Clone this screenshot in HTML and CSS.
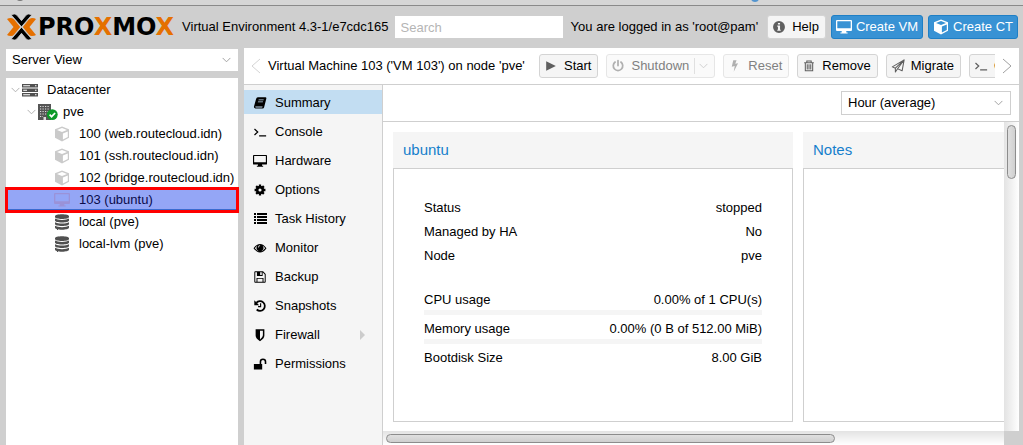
FILE: index.html
```html
<!DOCTYPE html>
<html lang="en">
<head>
<meta charset="utf-8">
<title>Proxmox Virtual Environment</title>
<link rel="stylesheet" href="styles.css">
</head>
<body>
<svg class="sprite" aria-hidden="true">
  <symbol id="cube" viewBox="0 0 16 16"><path fill-rule="evenodd" d="M8 .6 15 3.2V11.8L8 15.6 1 11.8V3.2ZM8 2 3 3.9 8 5.9 13 3.9ZM8.9 7.4V13.6L13.8 11V5.5Z"/></symbol>
  <symbol id="desktop" viewBox="0 0 16 16"><path fill-rule="evenodd" d="M1 1H15Q16 1 16 2V11Q16 12 15 12H10.3V13.4H11.6V14.6H4.4V13.4H5.7V12H1Q0 12 0 11V2Q0 1 1 1ZM1.3 2.2V9.3H14.7V2.2Z"/></symbol>
  <symbol id="disks" viewBox="0 0 16 16"><path d="M1 2.2C1 .9 4 .2 8 .2S15 .9 15 2.2V3C15 4.3 12 5 8 5S1 4.3 1 3ZM1 4.6C2.500 5.500 5 6 8 6S13.500 5.500 15 4.600V6.500C15 7.800 12 8.500 8 8.500S1 7.800 1 6.500ZM1 8.200C2.500 9.100 5 9.600 8 9.600S13.500 9.100 15 8.200V10C15 11.300 12 12 8 12S1 11.300 1 10ZM1 11.800C2.500 12.700 5 13.200 8 13.200S13.500 12.700 15 11.800V13.600C15 15 12 15.800 8 15.800S1 15 1 13.600Z"/></symbol>
  <symbol id="server" viewBox="0 0 16 16"><path fill-rule="evenodd" d="M0 2H16V5.500H0ZM0 6.500H16V10H0ZM0 11H16V14.500H0ZM1.200 3.300V4.200H8V3.300ZM1.200 7.800V8.700H5V7.800ZM1.200 12.300V13.200H8V12.300ZM13 3.200V4.300H14.500V3.200ZM13 7.700V8.800H14.500V7.700ZM13 12.200V13.300H14.500V12.200Z"/></symbol>
  <symbol id="building" viewBox="0 0 20 16"><path fill="#555" d="M0 0H13V16H0Z"/><path stroke="#ddd" stroke-width="1.200" stroke-dasharray="1.200 1.300" d="M2 2.500H12M2 5H12M2 7.500H12M2 10H12M2 12.500H5"/><path fill="#ddd" d="M5.500 13H8V16H5.500Z"/><circle cx="14.300" cy="10.600" r="5.400" fill="#0c9a28"/><path fill="none" stroke="#fff" stroke-width="1.700" d="m11.600 10.700 2 2 3.500-3.700"/></symbol>
  <symbol id="book" viewBox="0 0 16 16"><path fill-rule="evenodd" d="M5.500 1.500H14.300Q15.600 1.800 15.200 3.200L12.700 12.800Q12.300 14.300 11 14.300H3Q.6 13.900 1.200 11.800L3.500 3.400Q4 1.700 5.500 1.500ZM6.500 4 6.200 4.900H12L12.300 4ZM5.800 6.300 5.500 7.200H11.200L11.500 6.300ZM2.800 12Q2.300 13.100 3.300 13.100H10.500L11 12Z"/></symbol>
  <symbol id="terminal" viewBox="0 0 16 16"><path fill="none" stroke="currentColor" stroke-width="1.400" d="m1.700 4.500 3.700 3.500-3.700 3.500M7 12.300H15"/></symbol>
  <symbol id="gear" viewBox="0 0 16 16"><circle cx="8" cy="8" r="3.300" fill="none" stroke="currentColor" stroke-width="3"/><path fill="none" stroke="currentColor" stroke-width="2.600" d="M8 1.800V4M8 12V14.200M1.800 8H4M12 8H14.200M3.600 3.600 5.200 5.200M10.800 10.800 12.400 12.400M3.600 12.400 5.200 10.800M10.800 5.200 12.400 3.600"/></symbol>
  <symbol id="list" viewBox="0 0 14 14"><path d="M1 1H3V3H1ZM4 1H14V3H4ZM1 4H3V6H1ZM4 4H14V6H4ZM1 7H3V9H1ZM4 7H14V9H4ZM1 10H3V12H1ZM4 10H14V12H4Z"/></symbol>
  <symbol id="eye" viewBox="0 0 16 16"><path fill-rule="evenodd" d="M.6 8.200Q4 3.300 8 3.300T15.400 8.200Q12 13.200 8 13.200T.6 8.200ZM2.100 8.200Q5 11.900 8 11.900T13.900 8.200Q12.600 6.300 11 5.400A3.900 3.900 0 1 1 5 5.400Q3.400 6.300 2.100 8.200ZM8 5A2 2 0 0 0 6 7.300L6.800 7.300A1.500 1.500 0 0 1 8.200 5.800Z"/></symbol>
  <symbol id="floppy" viewBox="0 0 16 16"><path fill-rule="evenodd" d="M2.500 1.500H11.500L14.500 4.500V13.500Q14.500 14.500 13.500 14.500H2.500Q1.500 14.500 1.500 13.500V2.500Q1.500 1.500 2.500 1.500ZM2.600 2.600V13.400H4V9H12V13.400H13.400V5L11 2.600V6.800H4.500V2.600ZM5.100 10.100V13.400H10.900V10.100ZM8.200 2.600V5.700H10V2.600Z"/></symbol>
  <symbol id="history" viewBox="0 0 16 16"><path fill="none" stroke="currentColor" stroke-width="2" d="M3.800 4.500A5.500 5.500 0 1 1 4.200 12"/><path d="M1.500 1.500V7H7Z"/><path fill="none" stroke="currentColor" stroke-width="1.300" d="M8.700 4.800V8.700H5.800"/></symbol>
  <symbol id="shield" viewBox="0 0 16 16"><path fill-rule="evenodd" d="M3 1.500H13V8.500Q13 12 8 15 3 12 3 8.500ZM8 3.200V13Q11.300 11 11.300 8.400V3.200Z"/></symbol>
  <symbol id="unlock" viewBox="0 0 16 16"><path d="M1 8H10.500V14.300H1Z"/><path fill="none" stroke="currentColor" stroke-width="1.800" d="M8.500 8.500V5.500A2.900 2.900 0 0 1 14.300 5.500V8"/></symbol>
  <symbol id="play" viewBox="0 0 16 16"><path d="M2.500 2.500 13.500 8 2.500 13.500Z"/></symbol>
  <symbol id="power" viewBox="0 0 16 16"><path fill="none" stroke="currentColor" stroke-width="2" stroke-linecap="round" d="M8 1.800V7.500M4.700 3.500A5.400 5.400 0 1 0 11.300 3.500"/></symbol>
  <symbol id="bolt" viewBox="0 0 16 16"><path d="M6 1.500H9.800L8.300 5.500 11.500 4.800 6.500 14.700 7.700 8 4.300 8.900Z"/></symbol>
  <symbol id="trash" viewBox="0 0 16 16"><path fill="none" stroke="currentColor" stroke-width="1.200" d="M2.500 4.300H13.500M5.500 4V2.200H10.500V4M3.800 4.500V13.500H12.200V4.500M6 6V12M8 6V12M10 6V12"/></symbol>
  <symbol id="plane" viewBox="0 0 16 16"><path fill="none" stroke="currentColor" stroke-width="1.200" stroke-linejoin="round" d="M15 1 1.500 9 5 10.500 15 1 12.700 13.500 7.200 11M5 10.500V14.800L7.500 11.200 15 1"/></symbol>
  <symbol id="info" viewBox="0 0 16 16"><path fill-rule="evenodd" d="M8 1.200A6.800 6.800 0 1 1 8 14.800 6.800 6.800 0 0 1 8 1.200ZM6.800 3.300V5.200H9.200V3.300ZM6 6.400V7.600H6.800V11H6V12.300H10V11H9.200V6.400Z"/></symbol>
  <symbol id="down" viewBox="0 0 10 6"><path fill="none" stroke="currentColor" d="m.7.700 4.300 4.300L9.300.7"/></symbol>
</svg>

<div class="strip"><span class="strip-dot strip-dot-dark"></span><span class="strip-dot strip-dot-blue"></span></div>

<header class="header">
  <svg class="logo-mark" viewBox="0 0 29 26" aria-hidden="true">
    <path fill="#e57000" d="M0 5Q1.500 4 4 4 6 4 7.200 5.500L13.200 13 7.200 20.500Q6 22 4 22 1.500 22 0 21L6.500 13ZM29 5Q27.500 4 25 4 23 4 21.800 5.500L15.800 13 21.800 20.500Q23 22 25 22 27.500 22 29 21L22.500 13Z"/>
    <path fill="#000" stroke="#cfcfcf" stroke-width=".8" d="M4.300 1Q6 0 7.500 0 9 0 10.200 1.500L14.500 6.700 18.800 1.500Q20 0 21.500 0 23 0 24.700 1L14.500 12.800ZM4.300 25Q6 26 7.500 26 9 26 10.200 24.500L14.500 19.300 18.800 24.500Q20 26 21.500 26 23 26 24.700 25L14.500 13.200Z"/>
  </svg>
  <span class="wordmark">PRO<span class="wordmark-x">X</span>MO<span class="wordmark-x">X</span></span>
  <span class="version">Virtual Environment 4.3-1/e7cdc165</span>
  <input class="search" type="text" placeholder="Search" aria-label="Search">
  <span class="user">You are logged in as 'root@pam'</span>
  <div class="header-actions">
    <button class="btn" type="button"><svg class="icon"><use href="#info"/></svg>Help</button>
    <button class="btn btn-primary" type="button"><svg class="icon"><use href="#desktop"/></svg>Create VM</button>
    <button class="btn btn-primary" type="button"><svg class="icon"><use href="#cube"/></svg>Create CT</button>
  </div>
</header>

<div class="main">
  <aside class="left">
    <div class="select-wrap">
      <select class="select" aria-label="View"><option>Server View</option></select>
      <svg class="select-arrow"><use href="#down"/></svg>
    </div>
    <ul class="tree">
      <li class="node"><svg class="expander"><use href="#down"/></svg><svg class="tree-icon"><use href="#server"/></svg>Datacenter</li>
      <li class="node level-1"><svg class="expander"><use href="#down"/></svg><svg class="tree-icon building"><use href="#building"/></svg>pve</li>
      <li class="node level-2"><svg class="tree-icon off"><use href="#cube"/></svg>100 (web.routecloud.idn)</li>
      <li class="node level-2"><svg class="tree-icon off"><use href="#cube"/></svg>101 (ssh.routecloud.idn)</li>
      <li class="node level-2"><svg class="tree-icon off"><use href="#cube"/></svg>102 (bridge.routecloud.idn)</li>
      <li class="node level-2 selected"><svg class="tree-icon"><use href="#desktop"/></svg>103 (ubuntu)</li>
      <li class="node level-2"><svg class="tree-icon"><use href="#disks"/></svg>local (pve)</li>
      <li class="node level-2"><svg class="tree-icon"><use href="#disks"/></svg>local-lvm (pve)</li>
    </ul>
  </aside>

  <main class="right">
    <div class="toolbar">
      <button class="scroller faded" type="button" aria-label="Scroll left"><svg viewBox="0 0 10 16"><path d="M9 1 1 8 9 15"/></svg></button>
      <h1 class="title">Virtual Machine 103 ('VM 103') on node 'pve'</h1>
      <div class="tools">
        <button class="btn" type="button"><svg class="icon"><use href="#play"/></svg>Start</button>
        <button class="btn" type="button" disabled><svg class="icon"><use href="#power"/></svg>Shutdown<span class="split"><svg class="split-arrow"><use href="#down"/></svg></span></button>
        <button class="btn" type="button" disabled><svg class="icon"><use href="#bolt"/></svg>Reset</button>
        <button class="btn" type="button"><svg class="icon"><use href="#trash"/></svg>Remove</button>
        <button class="btn" type="button"><svg class="icon"><use href="#plane"/></svg>Migrate</button>
        <button class="btn" type="button"><svg class="icon"><use href="#terminal"/></svg>Console</button>
      </div>
      <button class="scroller" type="button" aria-label="Scroll right"><svg viewBox="0 0 10 16"><path d="M1 1 9 8 1 15"/></svg></button>
    </div>

    <div class="workspace">
      <nav class="menu">
        <a class="menu-item active" href="#"><svg class="menu-icon"><use href="#book"/></svg>Summary</a>
        <a class="menu-item" href="#"><svg class="menu-icon"><use href="#terminal"/></svg>Console</a>
        <a class="menu-item" href="#"><svg class="menu-icon"><use href="#desktop"/></svg>Hardware</a>
        <a class="menu-item" href="#"><svg class="menu-icon"><use href="#gear"/></svg>Options</a>
        <a class="menu-item" href="#"><svg class="menu-icon"><use href="#list"/></svg>Task History</a>
        <a class="menu-item" href="#"><svg class="menu-icon"><use href="#eye"/></svg>Monitor</a>
        <a class="menu-item" href="#"><svg class="menu-icon"><use href="#floppy"/></svg>Backup</a>
        <a class="menu-item" href="#"><svg class="menu-icon"><use href="#history"/></svg>Snapshots</a>
        <a class="menu-item" href="#"><svg class="menu-icon"><use href="#shield"/></svg>Firewall<span class="submenu"></span></a>
        <a class="menu-item" href="#"><svg class="menu-icon"><use href="#unlock"/></svg>Permissions</a>
      </nav>

      <div class="content">
        <div class="content-bar">
          <div class="select-wrap boxed">
            <select class="select" aria-label="Time range"><option>Hour (average)</option></select>
            <svg class="select-arrow"><use href="#down"/></svg>
          </div>
        </div>
        <div class="scroll-area">
          <div class="panels">
            <section class="panel">
              <h2 class="panel-title">ubuntu</h2>
              <div class="panel-body">
                <div class="row"><span>Status</span><span>stopped</span></div>
                <div class="row"><span>Managed by HA</span><span>No</span></div>
                <div class="row"><span>Node</span><span>pve</span></div>
                <div class="usage-list">
                  <div>
                    <div class="usage"><label for="cpu">CPU usage</label><span>0.00% of 1 CPU(s)</span></div>
                    <progress class="bar" id="cpu" value="0" max="100"></progress>
                  </div>
                  <div>
                    <div class="usage"><label for="mem">Memory usage</label><span>0.00% (0 B of 512.00 MiB)</span></div>
                    <progress class="bar" id="mem" value="0" max="512"></progress>
                  </div>
                  <div class="usage"><span>Bootdisk Size</span><span>8.00 GiB</span></div>
                </div>
              </div>
            </section>
            <section class="panel">
              <h2 class="panel-title">Notes</h2>
              <div class="panel-body"></div>
            </section>
          </div>
          <div class="vtrack"><div class="vthumb"></div></div>
          <div class="htrack"><div class="hthumb"></div></div>
        </div>
      </div>
    </div>
  </main>
</div>
</body>
</html>
```

FILE: styles.css
```css
* { box-sizing: border-box; }

body {
  margin: 0;
  height: 100vh;
  overflow: hidden;
  display: flex;
  flex-direction: column;
  background: #cfcfcf;
  color: #000;
  font: 13px/20px "Liberation Sans", Arial, sans-serif;
}

button, input, select { font: inherit; color: inherit; margin: 0; }
h1, h2 { margin: 0; font-size: 13px; font-weight: normal; }
svg { fill: currentColor; flex: none; }
.sprite { position: absolute; width: 0; height: 0; }

/* Top edge */
.strip {
  position: relative;
  flex: none;
  height: 6px;
  background: #d6d6d6;
  border-bottom: 1px solid #8a8a8a;
  overflow: hidden;
}
.strip-dot { position: absolute; top: -6px; width: 8px; height: 8px; border-radius: 50%; }
.strip-dot-dark { left: 16px; top: -7px; background: #777; }
.strip-dot-blue { left: 751px; background: #5294cf; }

/* Header */
.header {
  flex: none;
  height: 42px;
  display: flex;
  align-items: center;
  padding: 0 5px 0 7px;
  white-space: nowrap;
}
.logo-mark { width: 29px; height: 26px; margin-right: 2px; }
.wordmark { font: bold 24px/26px "DejaVu Sans", sans-serif; }
.wordmark-x { color: #e57000; }
.version { margin-left: 8px; }
.search {
  width: 168px;
  height: 22px;
  margin-left: 6px;
  padding: 0 6px;
  border: 0;
  background: #fff;
}
.search::placeholder { color: #b5b5b5; opacity: 1; }
.user { margin-left: auto; padding-right: 9px; }
.header-actions { display: flex; gap: 5px; }

.btn {
  display: flex;
  align-items: center;
  flex: none;
  height: 24px;
  padding: 0 6px 0 4px;
  border: 1px solid #d4d4d4;
  border-radius: 3px;
  background: #f5f5f5;
  white-space: nowrap;
}
.btn:disabled { background: #fafafa; border-color: #e6e6e6; color: #808080; }
.btn:disabled .icon { color: #b0b0b0; }
.btn-primary { padding-right: 4px; background: #3892d4; border-color: #1f7fc5; color: #fff; }
.icon { width: 14px; height: 14px; margin-right: 6px; color: #5f5f5f; }
.btn-primary .icon { width: 16px; height: 16px; margin-right: 4px; color: #fff; }
.split {
  display: flex;
  align-items: center;
  height: 16px;
  margin-left: 5px;
  padding-left: 4px;
  border-left: 1px solid #e0e0e0;
}
.split-arrow { width: 9px; height: 6px; color: #ccc; }

/* Main split */
.main { flex: 1; min-height: 0; display: flex; gap: 6px; padding: 0 4px 0 6px; }

.left { flex: none; width: 232px; display: flex; flex-direction: column; gap: 7px; padding-top: 1px; }
.select-wrap { position: relative; background: #fff; }
.select {
  appearance: none;
  display: block;
  width: 100%;
  height: 22px;
  padding: 0 24px 0 6px;
  border: 0;
  border-radius: 0;
  background: transparent;
}
.select-arrow {
  position: absolute;
  right: 7px;
  top: 50%;
  width: 9px;
  height: 6px;
  margin-top: -3px;
  color: #999;
  pointer-events: none;
}
.boxed { width: 170px; border: 1px solid #cfcfcf; }

.tree { flex: 1; margin: 0; padding: 1px 0 0; list-style: none; background: #fff; }
.node { position: relative; display: flex; align-items: center; height: 22px; white-space: nowrap; }
.level-1 { padding-left: 16px; }
.level-2 { padding-left: 48px; }
.expander { width: 9px; height: 6px; margin: 0 2px 0 5px; color: #aaa; }
.tree-icon { width: 16px; height: 16px; margin-right: 9px; color: #505050; }
.building { width: 20px; margin-right: 5px; }
.off { color: #cacaca; }
.selected { background: #94a6f6; color: #0b0b4a; }
.selected .tree-icon { color: #9a92d8; }
.selected::after {
  content: "";
  position: absolute;
  inset: -2px -1px;
  border: 3px solid #f00;
  box-shadow: inset 0 -1px #3a6bd0;
}

/* Right side */
.right { flex: 1; min-width: 0; display: flex; flex-direction: column; background: #fff; }
.toolbar {
  flex: none;
  height: 37px;
  display: flex;
  align-items: center;
  border-bottom: 1px solid #cfcfcf;
  white-space: nowrap;
}
.scroller { flex: none; width: 24px; height: 24px; padding: 0 7px; border: 0; background: none; }
.scroller svg { display: block; width: 10px; height: 16px; fill: none; stroke: #a0a0a0; }
.faded svg { stroke: #d4d4d4; }
.title { flex: none; width: 271px; }
.tools { flex: 1; min-width: 0; display: flex; gap: 8px; overflow: hidden; }

.workspace { flex: 1; min-height: 0; display: flex; }
.menu {
  flex: none;
  width: 139px;
  display: flex;
  flex-direction: column;
  gap: 5px;
  padding-top: 5px;
  background: #f5f5f5;
  border-right: 1px solid #cfcfcf;
}
.menu-item {
  display: flex;
  align-items: center;
  height: 24px;
  padding: 2px 17px 0 9px;
  color: #000;
  text-decoration: none;
}
.active { background: #c2ddf2; }
.menu-icon { width: 14px; height: 14px; margin-right: 8px; }
.submenu {
  margin-left: auto;
  border: solid transparent;
  border-width: 5px 0 5px 5px;
  border-left-color: #ccc;
}

.content { flex: 1; min-width: 0; display: flex; flex-direction: column; }
.content-bar {
  flex: none;
  height: 37px;
  display: flex;
  align-items: center;
  justify-content: flex-end;
  padding-right: 8px;
  border-bottom: 1px solid #cfcfcf;
}
.scroll-area {
  flex: 1;
  min-height: 0;
  display: grid;
  grid-template-columns: minmax(0, 1fr) 15px;
  grid-template-rows: minmax(0, 1fr) 14px;
  background: #cfcfcf;
}
.panels { display: flex; gap: 10px; padding: 10px 0 9px 10px; overflow: hidden; background: #fff; }
.panel { flex: none; width: 400px; display: flex; flex-direction: column; }
.panel-title {
  height: 36px;
  padding: 0 10px;
  background: #f5f5f5;
  color: #157fcc;
  font-size: 15px;
  line-height: 36px;
}
.panel-body { flex: 1; padding: 27px 30px 0; border: 1px solid #cfcfcf; }
.row, .usage { display: flex; justify-content: space-between; }
.row { line-height: 24px; }
.usage-list { display: flex; flex-direction: column; gap: 4px; margin-top: 22px; }
.bar {
  appearance: none;
  display: block;
  width: 100%;
  height: 5px;
  border: 0;
  background: #f5f5f5;
}
.bar::-webkit-progress-bar { background: #f5f5f5; }
.bar::-webkit-progress-value { background: #c2ddf2; }

/* Scrollbars */
.vtrack { padding: 3px; background: linear-gradient(to right, #e3e3e3, #fff); }
.htrack { padding: 3px 3px 2px; background: linear-gradient(#e3e3e3, #fff); }
.vthumb, .hthumb { border: 1px solid #8c8c8c; border-radius: 5px; }
.vthumb { height: 54px; background: linear-gradient(to right, #e0e0e0, #cfcfcf); }
.hthumb { width: 73%; height: 9px; background: linear-gradient(#e0e0e0, #cfcfcf); }
```
